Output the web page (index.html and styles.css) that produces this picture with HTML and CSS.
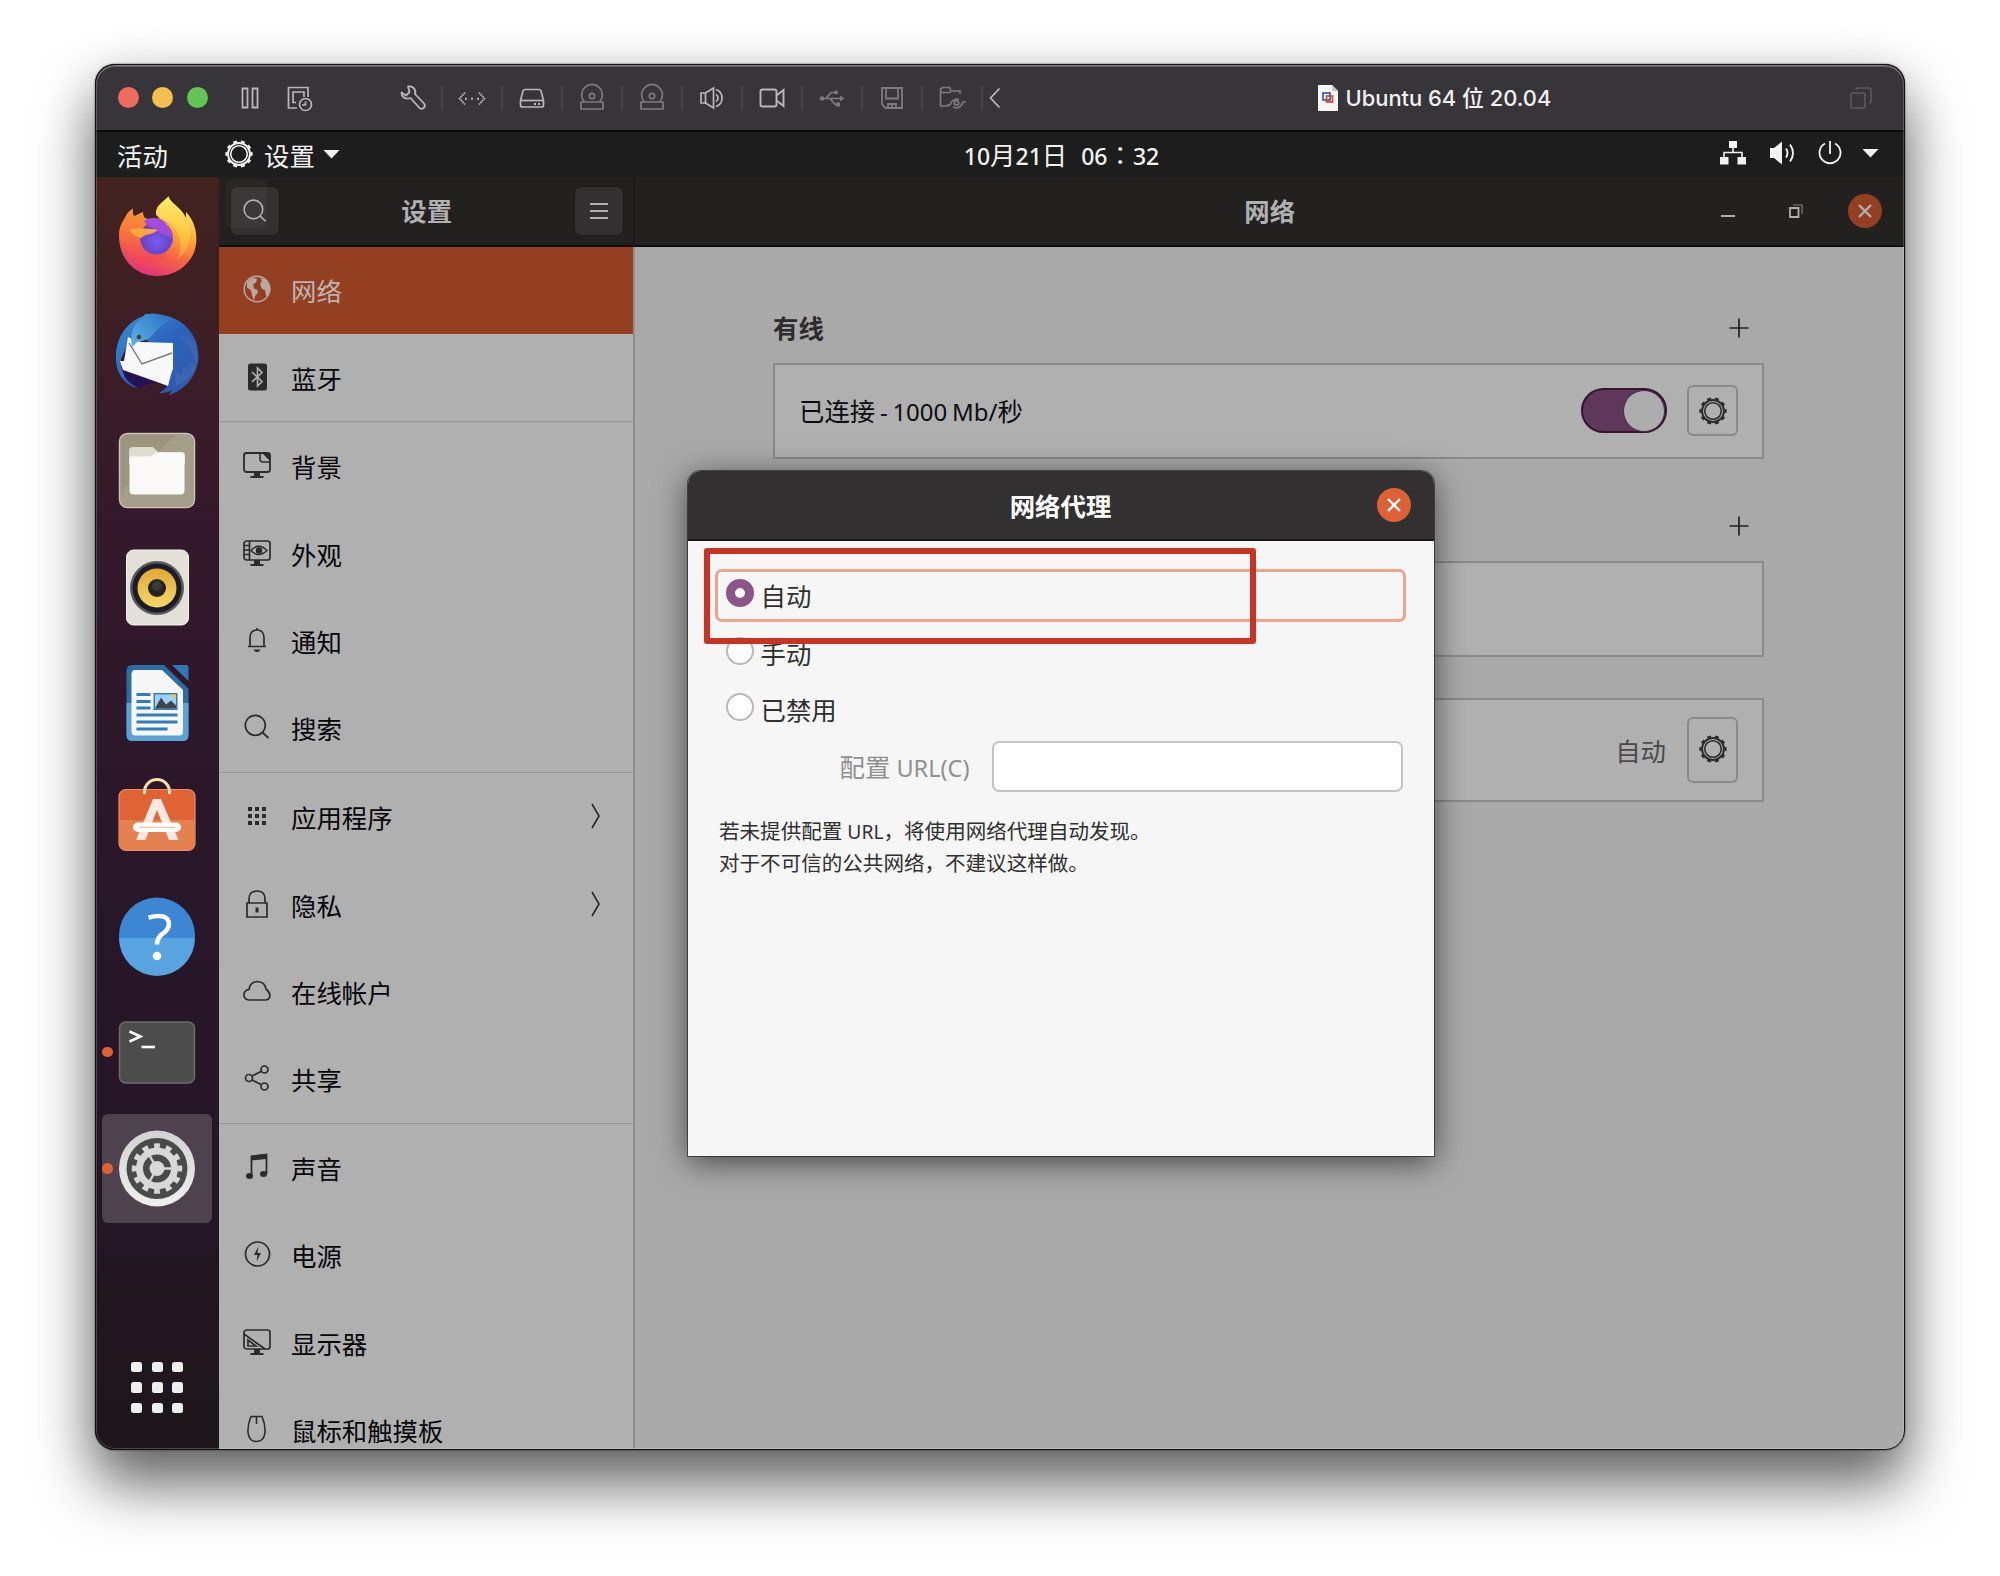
FILE: index.html
```html
<!DOCTYPE html>
<html lang="zh-CN">
<head>
<meta charset="utf-8">
<title>Ubuntu 64 位 20.04</title>
<link rel="stylesheet" href="styles.css">
</head>
<body>
<svg class="defs" width="0" height="0">
  <defs>
    <symbol id="gear" viewBox="0 0 28 28">
      <g fill="none" stroke="currentColor">
        <circle cx="14" cy="14" r="8.3" stroke-width="1.6"/>
        <circle cx="14" cy="14" r="11" stroke-width="1.9"/>
        <circle cx="14" cy="14" r="12.6" stroke-width="2" pathLength="20" stroke-dasharray="1 1" stroke-dashoffset="0.5"/>
      </g>
    </symbol>
    <symbol id="disc" viewBox="0 0 30 30">
      <g fill="none" stroke="currentColor" stroke-width="1.7">
        <path d="M7 18.500A10.400 10.400 0 1 1 23 18.500"/><circle cx="15" cy="13" r="2.700"/><path d="M4 19h22v7H4z"/>
      </g>
    </symbol>
    <symbol id="search" viewBox="0 0 28 28">
      <g fill="none" stroke="currentColor" stroke-width="1.7"><circle cx="12.300" cy="12.300" r="10"/><path d="M19.500 19.500l6 5.500"/></g>
    </symbol>
    <symbol id="close" viewBox="0 0 34 34"><path d="M11 11l12 12M23 11L11 23" fill="none" stroke="currentColor" stroke-width="2.400"/></symbol>
    <symbol id="plus" viewBox="0 0 20 20"><path d="M10 .5v19M.5 10h19" fill="none" stroke="currentColor" stroke-width="1.700"/></symbol>
    <symbol id="chevron" viewBox="0 0 12 28"><path d="M2 2l7 12-7 12" fill="none" stroke="currentColor" stroke-width="1.700"/></symbol>
    <linearGradient id="fox" x1=".7" y1="0" x2=".3" y2="1"><stop offset="0" stop-color="#fff36a"/><stop offset=".35" stop-color="#fcb13a"/><stop offset=".65" stop-color="#f8663f"/><stop offset="1" stop-color="#e0307e"/></linearGradient>
    <linearGradient id="foxtail" x1=".5" y1="0" x2=".4" y2="1"><stop offset="0" stop-color="#fff06a"/><stop offset=".6" stop-color="#fdc23f"/><stop offset="1" stop-color="#f98a3c"/></linearGradient>
    <linearGradient id="foxhead" x1=".6" y1="0" x2=".4" y2="1"><stop offset="0" stop-color="#f89a36"/><stop offset=".5" stop-color="#f7743c"/><stop offset="1" stop-color="#ee3f5e"/></linearGradient>
    <radialGradient id="globe" cx=".5" cy=".6" r=".6"><stop offset="0" stop-color="#7d5cf2"/><stop offset=".6" stop-color="#6a46d0"/><stop offset="1" stop-color="#7a3cc0"/></radialGradient>
    <linearGradient id="bird" x1="0" y1="0" x2="1" y2="1"><stop offset="0" stop-color="#3d8fd6"/><stop offset=".5" stop-color="#2a63bb"/><stop offset="1" stop-color="#3556a8"/></linearGradient>
    <linearGradient id="birdhead" x1="0" y1="1" x2="1" y2="0"><stop offset="0" stop-color="#5ab7e8"/><stop offset="1" stop-color="#2c6fc4"/></linearGradient>
    <linearGradient id="cone" x1="0" y1="0" x2="0" y2="1"><stop offset="0" stop-color="#e0a834"/><stop offset="1" stop-color="#f5d968"/></linearGradient>
    <linearGradient id="rim" x1="0" y1="0" x2="0" y2="1"><stop offset="0" stop-color="#d2d2d2"/><stop offset="1" stop-color="#efefef"/></linearGradient>
  </defs>
</svg>

<div class="window">
  <header class="titlebar">
    <div class="lights"><i class="red"></i><i class="yellow"></i><i class="green"></i></div>
    <div class="vm-state">
      <svg class="i30" viewBox="0 0 30 30"><path d="M7.500 5.500h5v19h-5zM17.500 5.500h5v19h-5z" fill="none" stroke="currentColor" stroke-width="1.800"/></svg>
      <svg class="i30" viewBox="0 0 30 30"><g fill="none" stroke="currentColor" stroke-width="1.700"><path d="M13 25H4.500V4.500H24V14"/><path d="M12 19.500H9V9h11v5"/><circle cx="21.500" cy="21.500" r="6"/><path d="M21.500 18.500v3.500H18"/></g></svg>
    </div>
    <div class="tools">
      <span><svg class="i30" viewBox="0 0 30 30"><path d="M10 3.500c5-.8 8.500 3 7 7.500l9 9.500c2.500 3-1.500 7-4.500 4.500L12.500 15C7.500 17 3.500 14 3.500 9.500l4.500 3 3.500-3.500z" fill="none" stroke="currentColor" stroke-width="1.800" stroke-linejoin="round"/></svg></span>
      <span><svg class="i30" viewBox="0 0 30 30"><path d="M8 9.500L2.500 15.500 8 21.500M22 9.500l5.500 6-5.500 6" fill="none" stroke="currentColor" stroke-width="1.800" stroke-dasharray="1.800 .7"/><path d="M8 14.700h2v2H8zM14 14.700h2v2h-2zM20 14.700h2v2h-2z" fill="currentColor"/></svg></span>
      <span><svg class="i30" viewBox="0 0 30 30"><g fill="none" stroke="currentColor" stroke-width="1.700"><path d="M8 6.500h14q1.500 0 2 1.500l2.500 9.500v4.500q0 2-2 2h-19q-2 0-2-2v-4.500L6 8q.5-1.500 2-1.500z"/><path d="M4 17.500h22"/></g><path d="M17 20h2v2h-2zM21 20h2v2h-2z" fill="currentColor"/></svg></span>
      <span class="off"><svg class="i30"><use href="#disc"/></svg></span>
      <span class="off"><svg class="i30"><use href="#disc"/></svg></span>
      <span><svg class="i30" viewBox="0 0 30 30"><g fill="none" stroke="currentColor" stroke-width="1.700"><path d="M4 10h4.500v10H4zM8.500 10L16.500 5v20L8.500 20"/><path d="M19 6.500a9 9 0 0 1 0 17M19 11.500a4 4 0 0 1 0 7"/></g></svg></span>
      <span><svg class="i30" viewBox="0 0 30 30"><g fill="none" stroke="currentColor" stroke-width="1.900"><rect x="3.500" y="6.500" width="16" height="17" rx="2"/><path d="M19.500 12.500L26.500 7v16l-7-5.500"/></g></svg></span>
      <span class="off"><svg class="i30" viewBox="0 0 30 30"><path d="M5 15.500h20M9 15.500l5-6h5M13 15.500l5 6h4" fill="none" stroke="currentColor" stroke-width="1.700"/><circle cx="5" cy="15.500" r="2.300" fill="currentColor"/><circle cx="19" cy="9.500" r="2" fill="currentColor"/><path d="M19 19.500h4v4h-4zM23 12.500l4.500 3-4.500 3z" fill="currentColor"/></svg></span>
      <span class="off"><svg class="i30" viewBox="0 0 30 30"><g fill="none" stroke="currentColor" stroke-width="1.800"><path d="M5 5h20v20H8.500L5 21.500z"/><path d="M9 5v10.500h12V5M11 25v-4h8v4M15 21v4"/></g></svg></span>
      <span class="off"><svg class="i30" viewBox="0 0 30 30"><g fill="none" stroke="currentColor" stroke-width="1.700"><path d="M12 23H3.500V6l2-1.500h7L14 8h9v3M3.500 9.500H14"/><path d="M10 22h3q2-6 7-6l2 1M29 19h-3q-2 6-7 6l-3-1"/><circle cx="19.500" cy="20" r="2.200"/></g></svg></span>
    </div>
    <svg class="back" viewBox="0 0 12 22"><path d="M10.500 1.500L1.500 11l9 9.500" fill="none" stroke="currentColor" stroke-width="1.800"/></svg>
    <div class="vm-name">
      <svg width="20" height="26" viewBox="0 0 20 26"><path d="M0 0h14l6 6v20H0z" fill="#f6f6f6"/><path d="M14 0v6h6z" fill="#c4c4c4"/><rect x="5" y="8" width="7" height="7" fill="none" stroke="#2b5fb0" stroke-width="1.700"/><rect x="8.500" y="11" width="6" height="6" fill="none" stroke="#e0402c" stroke-width="1.700"/></svg>
      <span>Ubuntu 64 位 20.04</span>
    </div>
    <svg class="dup" viewBox="0 0 22 22"><g fill="none" stroke="currentColor" stroke-width="1.600"><rect x="1" y="6" width="14" height="15" rx="2"/><path d="M6 3q0-2 2-2h11q2 0 2 2v11q0 2-2 2"/></g></svg>
  </header>

  <div class="topbar">
    <span class="activities">活动</span>
    <svg class="i28 app-gear"><use href="#gear"/></svg>
    <span class="appname">设置</span>
    <svg class="caret" viewBox="0 0 18 10"><path d="M0 0h18L9 9.500z" fill="currentColor"/></svg>
    <span class="clock"><b>10</b>月<b>21</b>日<b class="gap">06</b><em lang="zh-TW">：</em><b>32</b></span>
    <div class="tray">
      <svg width="26" height="24" viewBox="0 0 26 24"><path d="M9 0h8v7H9zM0 16h8.500v7.500H0zM17.500 16H26v7.500h-8.500z" fill="currentColor"/><path d="M13 6v5.500M4 16v-4.500h18V16" fill="none" stroke="currentColor" stroke-width="1.600"/></svg>
      <svg width="26" height="24" viewBox="0 0 26 24"><path d="M0 7h4l8-6.500v23L4 17H0z" fill="currentColor"/><path d="M16 7.500q3 4.500 0 9M20 3.500q6 8.500 0 17" fill="none" stroke="currentColor" stroke-width="1.900"/></svg>
      <svg width="24" height="24" viewBox="0 0 24 24"><path d="M7 2.500a10.500 10.500 0 1 0 10 0M12 0v13" fill="none" stroke="currentColor" stroke-width="1.800"/></svg>
      <svg class="caret" viewBox="0 0 18 10"><path d="M0 0h18L9 9.500z" fill="currentColor"/></svg>
    </div>
  </div>

  <div class="desktop">
    <nav class="dock">
      <div class="app"><svg viewBox="0 0 84 84"><path d="M4 42C4 31 9 26 11 22 12 19 15 17 18 14.500 17 19 18 22 20 22L28 18C28 22 29 25 33 25L48 30 41 20C40 12 48 8 53.500 2.500 55 9 66 13 71 24V18C80 27 84 42 79.500 57 74 72 60 82 42 82 21 82 4 66 4 42z" fill="url(#fox)"/><path d="M41 21C41 12 49 8 53.500 2.500 55 10 66 13 71 24 80 40 74 58 62 66 70 50 64 32 50 27z" fill="url(#foxtail)"/><path d="M4 42C4 31 9 26 11 22 12 19 15 17 18 14.500 17 19 18 22 20 22L28 18C28 22 29 25 33 25L36 50 52 62C40 76 10 70 4 42z" fill="url(#foxhead)"/><circle cx="41.500" cy="44" r="16.500" fill="url(#globe)"/><path d="M29 27Q40 19 53 30L49 29Q58 34 58 44L42 38 44 34C38 36 33 33 29 27z" fill="#a24bdc"/><path d="M14 36c10-4 20 0 29-1-3 6-12 4-17 9-4-1-9-4-12-8z" fill="#fba838"/></svg></div>
      <div class="app"><svg viewBox="0 0 84 84"><path d="M32 4C58 0 83 16 83.500 45 83 66 68 80 54 84l3-5q-6 4-13 3 14-6 12-30L20 18Q14 30 6 48q-2 16 17 29C8 74 0 60 1 44 2 22 16 8 32 4z" fill="url(#bird)"/><path d="M8 60L54 75 40 72 30 74 24 77Q10 72 8 60z" fill="#251253"/><path d="M13 26L26 31 58 32V58L57 60 53 75Q34 68 8 59L5 50 9 50z" fill="#f8f8f8"/><path d="M14 32L27 53 57 42" fill="none" stroke="#777" stroke-width="1.400"/><path d="M33 3Q30 2 28 6 17 13 16 28l1 8 5-5Q34 30 40 21 48 12 56 9 45 1 33 3z" fill="url(#birdhead)"/><circle cx="24" cy="26" r="2.300" fill="#553b27"/><path d="M63 24q14 10 18 30l-8-3 2 8-8-3v8l-7-3 1 14q20-9 22-28Q82 24 63 24z" fill="#3b66b5"/></svg></div>
      <div class="app"><svg viewBox="0 0 84 84"><rect x="4.500" y="6.500" width="75" height="74" rx="8" fill="#9c9481" stroke="#c9c5b5" stroke-width="1.500"/><path d="M10 60L60 8h11q8 1 8 8v57q-1 7-8 7H13q-8-1-8-8z" fill="#aaa390" opacity=".7"/><path d="M18 20h20l5 5h24q3 0 3 3v9H14V24q0-4 4-4z" fill="#dedbd0"/><path d="M14.500 32q0-2.500 3-2.500h16q3 0 5-2l2-2h25q4 0 4 4v34q0 4-4 4h-47q-4 0-4-4z" fill="#faf9f8"/></svg></div>
      <div class="app"><svg viewBox="0 0 84 84"><rect x="11.500" y="6" width="62" height="75" rx="7" fill="#e3e0d8" stroke="#f5f3ee"/><circle cx="42" cy="44" r="27" fill="#55585c"/><circle cx="42" cy="44" r="24.500" fill="#1d1c26"/><circle cx="42" cy="44" r="19.500" fill="url(#cone)"/><circle cx="42" cy="44" r="9" fill="#222"/><circle cx="42" cy="42" r="5" fill="#3a3a3a"/></svg></div>
      <div class="app"><svg viewBox="0 0 84 84"><path d="M17 5h32l24.500 24v46q0 6-6 6h-50q-6 0-6-6V11q0-6 5.500-6z" fill="#2a6ea6"/><path d="M11.500 43h62v32q0 6-6 6h-50q-6 0-6-6z" fill="#5aa3d4"/><path d="M57 5h14q2.500 0 2.500 3v13z" fill="#2f79b2"/><path d="M20 10h27l21 20v42q0 3.500-3.500 3.500h-44q-4 0-4-4V14q0-4 3.500-4z" fill="#f7f7f7"/><path d="M21.500 34.500h14M21.500 41.500h14M21.500 48h14M21.500 55h41M21.500 62h41M21.500 69h31" stroke="#2f7dbd" stroke-width="3.200"/><path d="M38.500 33h24v17h-24z" fill="#2f7dbd"/><path d="M40 34.500h21v14H40z" fill="#9bd2f5"/><path d="M40 48.500l6-11 5 7 5-4 5 5v3z" fill="#444"/><path d="M55 34.500h6v5z" fill="#f2c23c"/></svg></div>
      <div class="app"><svg viewBox="0 0 84 84"><rect x="4" y="12.500" width="76" height="61" rx="7" fill="#df6334" stroke="#ec8f68" stroke-width="1.200"/><path d="M4.500 43h75v24q0 6-6.500 6H11q-6.500 0-6.500-6z" fill="#e5814f"/><path d="M29.500 17v-2a12.500 12.500 0 0 1 25 0v2" fill="none" stroke="#f7dfae" stroke-width="3"/><path d="M38 22h8l17.500 41H54L42 33 30.500 63H21z" fill="#fbe8df"/><rect x="18" y="45.500" width="48" height="9.500" rx="4.700" fill="#fff"/><path d="M24 50.300h36" stroke="#f0c4b0" stroke-width="1.200"/></svg></div>
      <div class="app"><svg viewBox="0 0 84 84"><circle cx="42" cy="42.500" r="38" fill="#3c86d3"/><path d="M4 45h76a38 38 0 0 1-76 0z" fill="#57a4e0"/><path d="M33.500 24.500q20-5 20.500 6.500 0 5-6 9.500-6 4-6 11" fill="none" stroke="#fff" stroke-width="4.600"/><circle cx="42" cy="63" r="4.300" fill="#fff"/></svg></div>
      <div class="app running"><svg viewBox="0 0 84 84"><rect x="4.500" y="12" width="75" height="61" rx="6.500" fill="#4c4c4c" stroke="#6c6c6c" stroke-width="1.500"/><path d="M14.500 21.500l11 5-11 5" fill="none" stroke="#fff" stroke-width="2.600"/><path d="M26.500 37h13.500" stroke="#fff" stroke-width="2.600"/></svg></div>
      <div class="app running active"><svg viewBox="0 0 84 84"><circle cx="42" cy="42.500" r="38" fill="url(#rim)"/><circle cx="42" cy="42.500" r="30.500" fill="#4a4a4a"/><circle cx="42" cy="42.500" r="22.500" fill="none" stroke="#d8d8d8" stroke-width="5.500" pathLength="24" stroke-dasharray="1 1" stroke-dashoffset=".5"/><circle cx="42" cy="42.500" r="17.500" fill="none" stroke="#d8d8d8" stroke-width="7"/><circle cx="42" cy="42.500" r="7.500" fill="#d8d8d8"/><path d="M42 42.500h15M42 42.500L34.500 29.500M42 42.500L34.500 55.500" stroke="#d8d8d8" stroke-width="2.400"/></svg></div>
      <div class="launcher"><i></i><i></i><i></i><i></i><i></i><i></i><i></i><i></i><i></i></div>
    </nav>

    <section class="settings">
      <aside class="side">
        <div class="side-head">
          <span class="hbtn ghosted"><svg width="26" height="26"><use href="#search"/></svg></span>
          <span class="htitle">设置</span>
          <span class="hbtn"><svg width="18" height="16" viewBox="0 0 18 16"><path d="M0 1h18M0 8h18M0 15h18" stroke="currentColor" stroke-width="1.900"/></svg></span>
        </div>
        <ul class="menu">
          <li class="on"><svg class="i28" viewBox="0 0 28 28"><circle cx="14" cy="14" r="12.800" fill="none" stroke="currentColor" stroke-width="1.500"/><path d="M4 7l5-4 5 .5-1 4-3 2 1 4 3 1 1 3-3 4-1 4-2-5-1-5-4-3zM17 3l6 2 4 7-1 8-3 1-1-6-3-1-2-5 2-3z" fill="currentColor"/></svg><span>网络</span></li>
          <li><svg class="i28" viewBox="0 0 28 28"><rect x="5" y=".5" width="19" height="27" rx="2.500" fill="currentColor"/><path d="M9 9l10 9.500-4.500 4.500V5L19 9.500 9 19" fill="none" stroke="#b0b0b0" stroke-width="1.600"/></svg><span>蓝牙</span></li>
          <li class="sep"><svg class="i28" viewBox="0 0 28 28"><g fill="none" stroke="currentColor" stroke-width="1.800"><rect x="1" y="2" width="26" height="19" rx="2.500"/><path d="M17 2v6q0 3 3 3h7" stroke-width="1.500"/></g><path d="M19 2h6l2 2v6zM11 21h6v4h3.500v2h-13v-2H11z" fill="currentColor"/></svg><span>背景</span></li>
          <li><svg class="i28" viewBox="0 0 28 28"><g fill="none" stroke="currentColor" stroke-width="1.700"><rect x="1" y="2" width="26" height="19" rx="2.500"/><path d="M6.500 2v19M1 6.500h5M1 11h5M1 15.500h5"/><path d="M8 11.500q7.500-8.500 16 0-8.500 8-16 0z" stroke-width="1.500"/></g><circle cx="16" cy="11.500" r="3.200" fill="currentColor"/><path d="M11 21h6v4h3.500v2h-13v-2H11z" fill="currentColor"/></svg><span>外观</span></li>
          <li><svg class="i28" viewBox="0 0 28 28"><path d="M5 20.500h18M7 20V12q0-8 7-8t7 8v8M14 4V2" fill="none" stroke="currentColor" stroke-width="1.700"/><path d="M10.500 23.500h7q-1 2.500-3.500 2.500t-3.500-2.500z" fill="currentColor"/></svg><span>通知</span></li>
          <li><svg class="i28"><use href="#search"/></svg><span>搜索</span></li>
          <li class="sep"><svg class="i28" viewBox="0 0 28 28"><path d="M5 5h4v4H5zM12 5h4v4h-4zM19 5h4v4h-4zM5 12h4v4H5zM12 12h4v4h-4zM19 12h4v4h-4zM5 19h4v4H5zM12 19h4v4h-4zM19 19h4v4h-4z" fill="currentColor"/></svg><span>应用程序</span><svg class="chev"><use href="#chevron"/></svg></li>
          <li><svg class="i28" viewBox="0 0 28 28"><path d="M4 13h20v14H4zM6 13V9q0-8 8-8t8 8v4" fill="none" stroke="currentColor" stroke-width="1.700"/><path d="M12.500 17.500h3v5h-3z" fill="currentColor"/></svg><span>隐私</span><svg class="chev"><use href="#chevron"/></svg></li>
          <li><svg class="i28" viewBox="0 0 28 28"><path d="M6 23q-5-.5-5-5 0-5 5-5.500Q7 5 14.500 4.500 22 5 23 12q3.500 2.500 4 6.500-.5 4-4 4.500z" fill="none" stroke="currentColor" stroke-width="1.700"/></svg><span>在线帐户</span></li>
          <li><svg class="i28" viewBox="0 0 28 28"><g fill="none" stroke="currentColor" stroke-width="1.700"><circle cx="6" cy="14" r="3.500"/><circle cx="21.500" cy="5.500" r="3.500"/><circle cx="21.500" cy="22.500" r="3.500"/><path d="M9 12l9-4.500M9 16l9 4.500"/></g></svg><span>共享</span></li>
          <li class="sep"><svg class="i28" viewBox="0 0 28 28"><path d="M8.500 23V3.500l15-2V21" fill="none" stroke="currentColor" stroke-width="1.800"/><path d="M8.500 2.500l15-1.500v5l-15 1.500z" fill="currentColor"/><ellipse cx="6.500" cy="23" rx="3.500" ry="3" fill="currentColor"/><ellipse cx="20.500" cy="21" rx="3.500" ry="3" fill="currentColor"/></svg><span>声音</span></li>
          <li><svg class="i28" viewBox="0 0 28 28"><circle cx="14.500" cy="14" r="12" fill="none" stroke="currentColor" stroke-width="1.700"/><path d="M15.500 6.500l-4.500 8.500h3.500l-1 6.500 4.500-8.500h-3.500z" fill="currentColor"/></svg><span>电源</span></li>
          <li><svg class="i28" viewBox="0 0 28 28"><g fill="none" stroke="currentColor" stroke-width="1.700"><rect x="1" y="2" width="26" height="19" rx="2.500"/><path d="M1 6l21 15M5 12v6h8z"/></g><path d="M11 21h6v4h3.500v2h-13v-2H11z" fill="currentColor"/></svg><span>显示器</span></li>
          <li><svg class="i28" viewBox="0 0 28 28"><path d="M8 1.500h11q3.500 8 3 16-1 9-8.500 9T5 17.500q-.5-8 3-16zM13.500 2v7" fill="none" stroke="currentColor" stroke-width="1.600"/></svg><span>鼠标和触摸板</span></li>
        </ul>
      </aside>

      <main class="panel">
        <div class="panel-head">
          <span class="htitle">网络</span>
          <div class="controls">
            <svg width="14" height="14" viewBox="0 0 14 14"><path d="M0 12h14" stroke="currentColor" stroke-width="2"/></svg>
            <svg width="14" height="14" viewBox="0 0 14 14"><path d="M1 4h8.500v9H1z" fill="none" stroke="currentColor" stroke-width="1.800"/><path d="M4 1h9v9" fill="none" stroke="currentColor" stroke-width="1.100" opacity=".7"/></svg>
            <svg class="x dim"><use href="#close"/></svg>
          </div>
        </div>
        <div class="content">
          <div class="group"><h2>有线</h2><svg width="20" height="20"><use href="#plus"/></svg></div>
          <div class="box wired"><span class="conn">已连接<b> - 1000 Mb/</b>秒</span><span class="switch"><i></i></span><span class="cog"><svg class="i28"><use href="#gear"/></svg></span></div>
          <div class="group vpn"><svg width="20" height="20"><use href="#plus"/></svg></div>
          <div class="box"></div>
          <div class="box proxy"><span class="mode">自动</span><span class="cog tall"><svg class="i28"><use href="#gear"/></svg></span></div>
        </div>
      </main>
    </section>
  </div>

  <div class="dialog">
    <div class="dialog-head"><span>网络代理</span><svg class="x"><use href="#close"/></svg></div>
    <div class="dialog-body">
      <div class="radio focus"><i class="checked"></i><span>自动</span></div>
      <div class="radio"><i></i><span>手动</span></div>
      <div class="radio"><i></i><span>已禁用</span></div>
      <div class="field"><label>配置<b> URL(C)</b></label><div class="input"></div></div>
      <p>若未提供配置<b> URL</b>，将使用网络代理自动发现。<br>对于不可信的公共网络，不建议这样做。</p>
    </div>
  </div>
  <div class="marker"></div>
</div>
</body>
</html>
```
FILE: styles.css
```css
* { box-sizing: border-box; }
body { margin: 0; padding: 64px 0 0 95px; height: 1576px; overflow: hidden; background: #fff; font-family: "Noto Sans CJK SC", sans-serif; font-size: 25.4px; line-height: 36px; }
svg { display: block; flex: none; }
i { display: block; flex: none; }
b { font-family: "Noto Sans", sans-serif; font-weight: 400; font-size: 23.500px; }
.defs { position: absolute; }
.i28 { width: 28px; height: 28px; }
.i30 { width: 30px; height: 30px; }

.window { position: relative; display: flex; flex-direction: column; width: 1810px; height: 1386px; border-radius: 20px; background: #1d1d1d; box-shadow: 0 0 2px rgba(0,0,0,.7), 0 36px 60px rgba(0,0,0,.55), 0 10px 50px rgba(0,0,0,.18); }
.window::after { content: ""; position: absolute; inset: 0; border-radius: 20px; border: 1px solid #111; box-shadow: inset 0 0 0 1px rgba(255,255,255,.2), inset 0 2px 0 rgba(255,255,255,.2); pointer-events: none; }

.titlebar { display: flex; align-items: center; height: 68px; flex: none; background: #38353a; border-bottom: 2px solid #0c0c0c; border-radius: 20px 20px 0 0; color: #b9b7ba; padding: 1px 33px 0 23px; }
.lights { display: flex; gap: 13.300px; }
.lights i { width: 21px; height: 21px; border-radius: 50%; }
.red { background: #ed6b5f; }
.yellow { background: #f5bf4f; }
.green { background: #62c655; }
.vm-state { display: flex; gap: 19px; margin-left: 27px; }
.tools { display: flex; margin-left: 70px; }
.tools span { width: 59.900px; height: 24px; display: flex; align-items: center; justify-content: center; border-right: 2px solid #48454a; }
.tools .off { color: #7d7b80; }
.back { width: 12px; height: 22px; margin-left: 6px; }
.vm-name { display: flex; align-items: center; gap: 8px; margin-left: 317px; color: #f2f1f3; font: 500 21.900px/28px Inter, "Noto Sans CJK SC", sans-serif; white-space: nowrap; }
.dup { width: 22px; height: 22px; margin-left: auto; color: #5d5b60; }

.topbar { display: flex; align-items: center; height: 45px; flex: none; color: #f2f2f2; background: #1d1d1d; padding: 0 26px 0 22px; }
.app-gear { margin: -2px 11px 0 57px; }
.activities { width: 51px; }
.caret { width: 17px; height: 9px; margin-top: -1px; }
.appname { margin-right: 8px; }
.clock { margin-left: 624px; white-space: nowrap; }
.clock b { font-weight: 500; font-size: 23px; }
.clock em { font-family: "Noto Sans CJK TC", sans-serif; font-style: normal; }
.clock .gap { margin-left: 14px; }
.tray { display: flex; align-items: center; gap: 22px; margin-left: auto; margin-top: -4px; }
.tray svg:nth-child(2) { margin-left: 2px; }
.tray .caret { margin-left: -2px; margin-top: 1px; }

.desktop { display: flex; flex: 1; min-height: 0; }
.dock { display: flex; flex-direction: column; width: 124px; padding-top: 1px; border-radius: 0 0 0 20px; background: linear-gradient(#43231f 0, #34192c 27%, #281629 58%, #251626 80%, #1e161a 100%); }
.app { position: relative; display: flex; align-items: center; justify-content: center; height: 116.500px; flex: none; }
.app svg { width: 84px; height: 84px; position: relative; }
.active::before { content: ""; position: absolute; left: 7px; top: 4px; width: 110px; height: 109px; border-radius: 6px; background: #4e424e; }
.running::after { content: ""; position: absolute; left: 7px; top: 53px; width: 10.500px; height: 10.500px; border-radius: 50%; background: #dd6135; }
.launcher { display: grid; grid-template-columns: repeat(3, 11px); gap: 10px 9.500px; margin: 135px 0 0 36px; }
.launcher i { width: 11px; height: 10.500px; border-radius: 2.500px; background: #eeeeec; }

.settings { display: flex; flex: 1; min-width: 0; }
.side { display: flex; flex-direction: column; width: 415.500px; background: #b0b0b0; flex: none; }
.side-head, .panel-head { display: flex; align-items: center; height: 69.600px; flex: none; background: #232120; border-bottom: 2px solid #0d0d0d; color: #b0b0b0; }
.side-head { justify-content: space-between; padding: 0 10px 0 12px; border-right: 2px solid #191817; }
.hbtn { display: flex; align-items: center; justify-content: center; width: 48px; height: 48px; border-radius: 6px; background: #323031; box-shadow: 0 0 2px #111; position: relative; }
.ghosted::before { content: ""; position: absolute; left: -5px; top: -7px; width: 41px; height: 48px; border-radius: 6px; background: rgba(255,255,255,.04); }
.htitle { font-weight: 700; margin-top: -1px; }
.menu { list-style: none; margin: 0; padding: 0; color: #2b2b2b; flex: 1; min-height: 0; overflow: hidden; border-right: 2px solid #8f8f8f; }
.menu li { display: flex; align-items: center; height: 87.300px; padding-left: 23.500px; padding-right: 31px; }
.menu li.sep { height: 88.900px; border-top: 1.600px solid #969696; }
.menu li.on { background: #943f22; color: #b9a8a1; }
.menu .on span { color: #bdb5b2; }
.menu span { margin-left: 20.500px; color: #050508; flex: 1; }
.menu .i28 { margin-top: -2px; }
.chev { width: 12px; height: 28px; margin-top: -2px; }

.panel { flex: 1; display: flex; flex-direction: column; background: #a9a9a9; min-width: 0; border-radius: 0 0 20px 0; }
.panel-head { position: relative; justify-content: center; }
.controls { position: absolute; right: 23px; top: 17px; display: flex; align-items: center; gap: 54px; }
.x { width: 34px; height: 34px; border-radius: 50%; background: #dd6135; color: #fff; }
.x.dim { background: #943f22; color: #b0b0b0; margin-left: -9px; }
.content { padding: 63px 141px 0 138.500px; }
.group { display: flex; align-items: center; justify-content: space-between; height: 36px; padding-right: 15px; margin-bottom: 17px; color: #222; }
.group h2 { margin: 0; font-size: 25.400px; font-weight: 700; color: #2b2b2e; position: relative; top: -1px; }
.vpn { justify-content: flex-end; margin-top: 49px; }
.box { display: flex; align-items: center; height: 96px; border: 2px solid #8a8a8a; background: #b0b0b0; padding: 0 24px; color: #0c0c10; }
.conn { flex: 1; white-space: pre; }
.conn b { font-size: 24px; word-spacing: -1.500px; }
.switch { width: 86px; height: 45px; border-radius: 23px; background: #5f375b; border: 2px solid #35152f; display: flex; justify-content: flex-end; margin-right: 20px; }
.switch i { width: 42px; height: 42px; margin-top: -.5px; border-radius: 50%; background: #adadad; border: 1px solid #4a2a46; }
.cog { width: 51px; height: 51px; border: 2px solid #898989; border-radius: 6px; display: flex; align-items: center; justify-content: center; color: #2b2b2b; }
.tall { height: 66px; }
.tall svg { margin-top: -2px; }
.proxy { margin-top: 41px; height: 104px; }
.mode { margin-left: auto; margin-right: 21px; color: #4a4a4a; }

.dialog { position: absolute; left: 592.500px; top: 407px; width: 746px; height: 684.500px; border-radius: 13px 13px 0 0; background: #f6f6f6; box-shadow: 0 0 0 1px rgba(0,0,0,.5), 0 6px 32px rgba(0,0,0,.6); color: #303030; }
.dialog-head { display: flex; align-items: center; justify-content: center; height: 70px; background: #323031; border-bottom: 2px solid #161616; border-radius: 13px 13px 0 0; color: #fff; font-weight: 700; position: relative; padding-bottom: 1px; }
.dialog-head .x { position: absolute; right: 22.500px; top: 17px; }
.dialog-body { padding: 27.500px 27.500px 0; }
.radio { display: flex; align-items: center; height: 56.500px; padding-left: 10.500px; }
.radio i { width: 28px; height: 28px; border-radius: 50%; background: #fff; border: 2px solid #b9b9b9; margin: -4px 7px 0 0; }
.radio.focus { height: 53px; padding-left: 7.500px; border: 3px solid #e9a68c; border-radius: 7px; margin-bottom: 3px; }
.radio .checked { border: 9px solid #8c5489; }
.radio:nth-child(3) span { margin-top: -1px; }
.field { display: flex; align-items: center; justify-content: flex-end; margin: 3.500px 3.500px 0 0; }
.field label { color: #909090; margin-right: 22px; white-space: pre; }
.input { width: 411px; height: 51px; border: 2px solid #c4c4c4; border-radius: 7px; background: #fff; }
.dialog-body p { margin: 21.500px 0 0 4px; font-size: 20.550px; line-height: 32px; white-space: nowrap; }
.dialog-body p b { font-size: 19.300px; line-height: 1; }
.marker { position: absolute; left: 609px; top: 484px; width: 552px; height: 96px; border: 6.500px solid #c93323; border-radius: 3px; }
```
